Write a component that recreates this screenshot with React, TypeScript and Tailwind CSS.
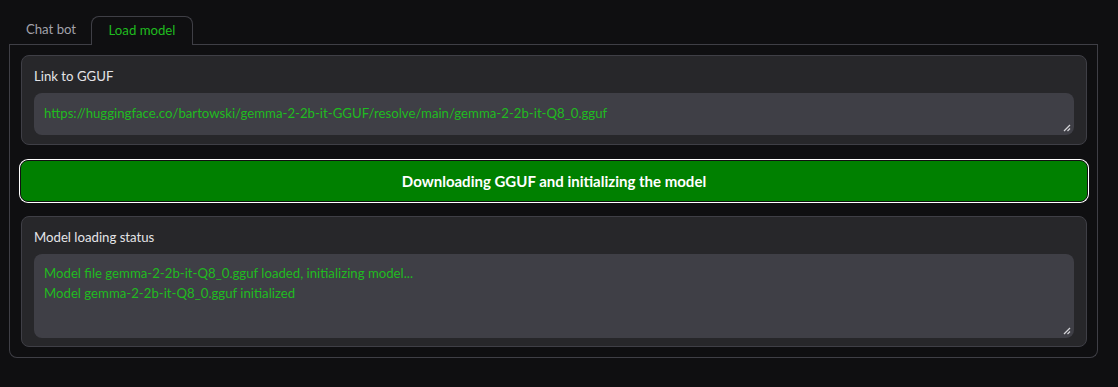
import React from "react";

const font = { fontFamily: '"Lato", "Liberation Sans", sans-serif' };

function Grip() {
  return (
    <svg className="absolute bottom-[3px] right-[3px]" width="8" height="8" viewBox="0 0 8 8">
      <line x1="1" y1="7" x2="7" y2="1" stroke="#d4d4d8" strokeWidth="1.3" />
      <line x1="4.5" y1="7" x2="7" y2="4.5" stroke="#d4d4d8" strokeWidth="1.3" />
    </svg>
  );
}

export default function App() {
  return (
    <div className="w-[1118px] h-[387px] bg-[#0f0f11] pt-[16px] px-[9px]" style={font}>
      {/* Tabs */}
      <div className="w-[1089px] flex items-end h-[29px]">
        <div className="w-[82px] h-[29px] border-b border-[#3f3f46] flex items-center justify-center text-[13.2px] text-[#a1a1aa] pl-[2px]">
          Chat bot
        </div>
        <div className="w-[102px] h-[29px] border border-b-0 border-[#3f3f46] rounded-t-[8px] flex items-center justify-center text-[13.2px] text-[#1fbb1f]">
          Load model
        </div>
        <div className="flex-1 h-[29px] border-b border-[#3f3f46]" />
      </div>
      {/* Panel */}
      <div className="w-[1089px] h-[313px] border border-t-0 border-[#3f3f46] rounded-b-[8px] pt-[10px] pl-[11px] pr-[10px]">
        <div className="h-[90px] bg-[#27272a] border border-[#3f3f46] rounded-[8px] px-[12px] pt-[11px]">
          <div className="text-[13.2px] text-[#e4e4e7] leading-[18px] h-[18px]">Link to GGUF</div>
          <div className="relative mt-[8px] h-[42px] bg-[#3f3f46] rounded-[8px] px-[10px] pt-[10px] text-[13.2px] leading-[20px] text-[#1fbb1f]">
            https://huggingface.co/bartowski/gemma-2-2b-it-GGUF/resolve/main/gemma-2-2b-it-Q8_0.gguf
            <Grip />
          </div>
        </div>
        <div className="mt-[15px] -mx-[1px] h-[42px] bg-[#008000] border border-[#111] ring-1 ring-white rounded-[8px] flex items-center justify-center text-[15px] font-bold text-white">
          Downloading GGUF and initializing the model
        </div>
        <div className="mt-[14px] h-[131px] bg-[#27272a] border border-[#3f3f46] rounded-[8px] px-[12px] pt-[11px]">
          <div className="text-[13.2px] text-[#e4e4e7] leading-[18px] h-[18px]">Model loading status</div>
          <div className="relative mt-[8px] h-[84px] bg-[#3f3f46] rounded-[8px] px-[10px] pt-[9px] text-[13.2px] leading-[20px] text-[#1fbb1f]">
            <div>Model file gemma-2-2b-it-Q8_0.gguf loaded, initializing model...</div>
            <div>Model gemma-2-2b-it-Q8_0.gguf initialized</div>
            <Grip />
          </div>
        </div>
      </div>
    </div>
  );
}
